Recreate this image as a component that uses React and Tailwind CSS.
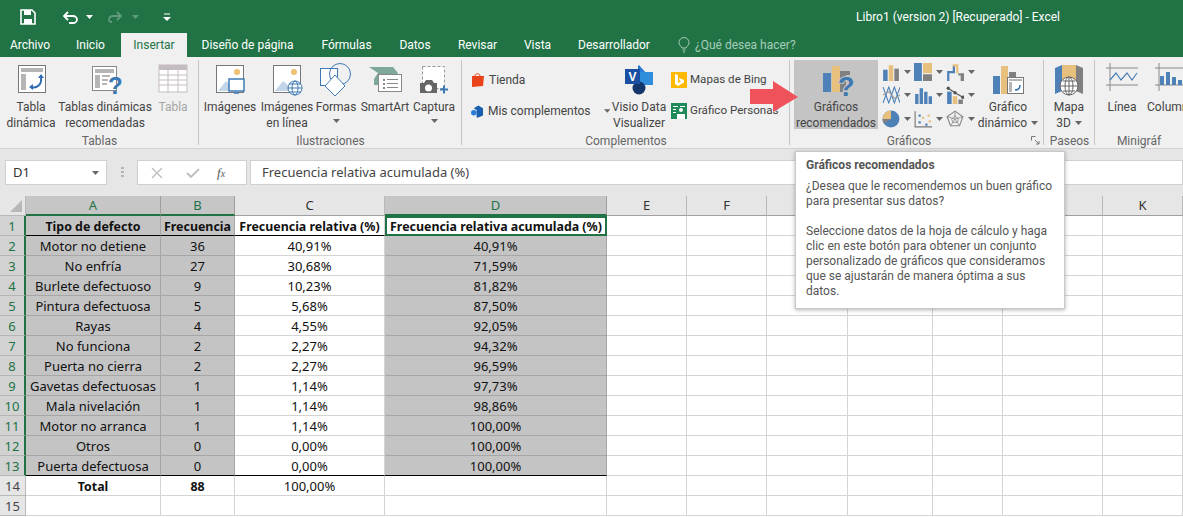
import React from "react";

const font = "font-['Roboto',sans-serif]";
const cellFont = "font-['Noto_Sans',sans-serif]";
const COLS = ["A", "B", "C", "D", "E", "F", "G", "H", "I", "J", "K"];
const rows = [
  ["Motor no detiene", "36", "40,91%", "40,91%"],
  ["No enfría", "27", "30,68%", "71,59%"],
  ["Burlete defectuoso", "9", "10,23%", "81,82%"],
  ["Pintura defectuosa", "5", "5,68%", "87,50%"],
  ["Rayas", "4", "4,55%", "92,05%"],
  ["No funciona", "2", "2,27%", "94,32%"],
  ["Puerta no cierra", "2", "2,27%", "96,59%"],
  ["Gavetas defectuosas", "1", "1,14%", "97,73%"],
  ["Mala nivelación", "1", "1,14%", "98,86%"],
  ["Motor no arranca", "1", "1,14%", "100,00%"],
  ["Otros", "0", "0,00%", "100,00%"],
  ["Puerta defectuosa", "0", "0,00%", "100,00%"],
];

const Caret = ({ className = "" }) => (
  <svg width="7" height="4" viewBox="0 0 7 4" className={className}>
    <path d="M0 0h7L3.5 4z" fill="#666" />
  </svg>
);

const Icon = ({ w = 36, h = 36, children }) => (
  <svg width={w} height={h} viewBox={`0 0 ${w} ${h}`} fill="none">
    {children}
  </svg>
);

const PivotIcon = () => (
  <Icon>
    <rect x="5.500" y="2.500" width="27" height="27" fill="#fff" stroke="#777" />
    <path d="M8 5h22v4H8zM8 11h5v16H8z" fill="#b5b5b5" />
    <path d="M18 24c6 2 11-3 10-9" stroke="#2f6db0" strokeWidth="2" />
    <path d="M25 15l3-4 3 4zM20 21l-4 3 4 3z" fill="#2f6db0" />
  </Icon>
);

const RecPivotIcon = () => (
  <Icon>
    <rect x="5.500" y="3.500" width="24" height="24" fill="#fff" stroke="#888" />
    <path d="M8 6h19v4H8zM8 12h5v13H8zM15 12h8v2h-8zM15 16h6v2h-6zM15 20h5v2h-5z" fill="#b5b5b5" />
    <text x="21" y="31" fontSize="24" fontWeight="700" fontFamily="Liberation Sans" fill="#3a78b5">?</text>
  </Icon>
);

const TableIcon = () => (
  <Icon w={32}>
    <rect x="2" y="2" width="28" height="27" fill="#fff" stroke="#c3bcc3" />
    <path d="M2 2h28v5H2z" fill="#c3bcc3" />
    <path d="M11 2v27M21 2v27M2 12h28M2 17h28M2 22h28" stroke="#c3bcc3" />
  </Icon>
);

const PictureIcon = ({ overlay }) => (
  <Icon w={32}>
    <rect x="2.500" y="2.500" width="27" height="27" fill="#fff" stroke="#777" />
    <circle cx="23" cy="9" r="3" fill="#eec170" />
    <path d="M4 28l8-10 7 6 3 4z" fill="#c3d5e8" />
    {overlay}
  </Icon>
);

const ShapesIcon = () => (
  <Icon>
    <rect x="2.500" y="5.500" width="17" height="17" fill="#fff" stroke="#3f7ab5" />
    <circle cx="22" cy="11" r="10.500" fill="none" stroke="#3f7ab5" />
    <path d="M17 12l10 11-10 10-10-10z" fill="#fff" stroke="#3f7ab5" />
  </Icon>
);

const SmartArtIcon = () => (
  <Icon w={34}>
    <path d="M1 4h24l5 6-5 6H6l4-6z" fill="#7ea99a" />
    <path d="M6 16h8v6H6z" fill="#7ea99a" />
    <rect x="10.500" y="11.500" width="23" height="17" fill="#fff" stroke="#888" />
    <path d="M15 16h2v2h-2zM15 20h2v2h-2zM19 16h11v1H19zM19 20h11v1H19zM15 24h2v2h-2zM19 24h11v1H19z" fill="#888" />
  </Icon>
);

const CaptureIcon = () => (
  <Icon>
    <rect x="6.500" y="3.500" width="22" height="22" fill="#fff" stroke="#999" strokeDasharray="3 2" />
    <path d="M4 20h4l2-3h6l2 3h3v10H4z" fill="#666" />
    <circle cx="12.500" cy="25" r="3.500" fill="#fff" />
    <path d="M24 26.500h8M28 22.500v8" stroke="#3f7ab5" strokeWidth="2" />
  </Icon>
);

const VisioIcon = () => (
  <Icon w={30} h={36}>
    <path d="M14 2l7 7-7 7z" fill="#1f6fc0" />
    <path d="M15 2l6 7h-6z" fill="#2a7dd6" />
    <rect x="16" y="9" width="13" height="13" fill="#2f8ddc" />
    <circle cx="15" cy="25" r="6.500" fill="#14366b" />
    <rect x="1" y="6" width="15" height="15" fill="#1a4fa3" />
    <text x="8.500" y="18" textAnchor="middle" fontSize="12" fontWeight="700" fontFamily="Liberation Sans" fill="#fff">V</text>
  </Icon>
);

const BingIcon = () => (
  <svg width="16" height="16" viewBox="0 0 16 16">
    <rect width="16" height="16" fill="#ffb900" />
    <path d="M4 2l3 1v8l3-1.500-1.500-1L8 6l5 2v2.500L7 14l-3-2z" fill="#fff" />
  </svg>
);

const PeopleIcon = () => (
  <svg width="16" height="16" viewBox="0 0 16 16">
    <rect width="16" height="16" fill="#1e8a5a" />
    <path d="M2 3h5v1H2zM2 6h3v1H2zM2 9h3v1H2zM9 3h5v1H9z" fill="#fff" />
    <circle cx="10" cy="7" r="2" fill="#fff" />
    <path d="M6 16v-5h8v5z" fill="#fff" />
  </svg>
);

const RecChartIcon = () => (
  <Icon>
    <rect x="5" y="10" width="8" height="19" fill="#4e81b8" />
    <rect x="14" y="3" width="8" height="26" fill="#e8c07d" />
    <rect x="22" y="8" width="10" height="4" fill="#808080" />
    <rect x="22" y="12" width="6" height="17" fill="#808080" />
    <text x="20" y="33" fontSize="27" fontWeight="700" fontFamily="Liberation Sans" fill="#3f78b0" stroke="#c4c4c4" strokeWidth="2" paintOrder="stroke">?</text>
  </Icon>
);

const PivotChartIcon = () => (
  <Icon w={34}>
    <rect x="2" y="13" width="7" height="18" fill="#4e81b8" />
    <rect x="10" y="3" width="7" height="28" fill="#e8c07d" />
    <rect x="18" y="9" width="7" height="5" fill="#808080" />
    <rect x="16.500" y="14.500" width="16" height="16" fill="#fff" stroke="#777" />
    <path d="M18 16h13v2H18zM18 19h3v10h-3z" fill="#b5b5b5" />
    <path d="M24 27c3 0 5-2 5-5" stroke="#2f6db0" strokeWidth="1.500" />
  </Icon>
);

const Map3DIcon = () => (
  <Icon>
    <path d="M4 5l7-3v26l-7 3z" fill="#4e81b8" />
    <path d="M11 2h7v26h-7z" fill="#e8c07d" />
    <path d="M18 2h7v26h-7z" fill="#e8c07d" />
    <path d="M25 2l7 3v26l-7-3z" fill="#808080" />
    <circle cx="18" cy="23" r="9" fill="#fff" stroke="#666" />
    <path d="M9 23h18M18 14v18M12 18h12M12 28h12" stroke="#666" />
    <ellipse cx="18" cy="23" rx="4" ry="9" stroke="#666" />
  </Icon>
);

const LineIcon = () => (
  <Icon w={32} h={30}>
    <path d="M0 5h32M4 0v28M0 22h32" stroke="#888" />
    <path d="M4 17l6-7 5 7 6-7 5 7 5-7" stroke="#4e81b8" strokeWidth="1.200" />
  </Icon>
);

const ColumnIcon = () => (
  <Icon w={32} h={30}>
    <path d="M0 5h32M4 0v28M0 22h32" stroke="#888" />
    <path d="M5 13h4v9H5zM11 9h4v13h-4zM17 14h4v8h-4zM23 17h4v5h-4z" fill="#4e81b8" />
  </Icon>
);

const smallCharts = [
  <><path d="M1 6h4v10H1z" fill="#4e81b8" /><path d="M6 2h4v14H6z" fill="#e8c07d" /><path d="M11 5h4v11h-4z" fill="#808080" /></>,
  <><path d="M0 0h7v16H0z" fill="#4e81b8" /><path d="M8 0h8v9H8z" fill="#e8c07d" /><path d="M8 10h8v6H8z" fill="#808080" /></>,
  <><path d="M1 16V7h5V2h2v7H3v7z" fill="#4e81b8" /><path d="M6 1h5v8H9V3H6z" fill="#e8c07d" /><path d="M11 9h5v7h-3v-5h-2z" fill="#808080" /></>,
  <><path d="M1 1l5 14 5-14 5 14" stroke="#4e81b8" /><path d="M1 15l5-14 5 14 5-14" stroke="#4e81b8" /><path d="M1 8l5-3 5 6 5-3" stroke="#999" /></>,
  <><path d="M1 7h3v9H1zM5 2h3v14H5zM9 5h3v11H9zM13 9h3v7h-3z" fill="#4e81b8" /></>,
  <><path d="M1 5h4v11H1z" fill="#4e81b8" /><path d="M6 9h4v7H6z" fill="#e8c07d" /><path d="M11 12h4v4h-4z" fill="#808080" /><path d="M2 2l6 4 7 4" stroke="#555" /><circle cx="2" cy="2" r="1.500" fill="#555" /><circle cx="8" cy="6" r="1.500" fill="#555" /><circle cx="15" cy="10" r="1.500" fill="#555" /></>,
  <><circle cx="8" cy="8" r="7.500" fill="#4e81b8" /><path d="M8 8V.5A7.500 7.500 0 0 0 .7 9.500z" fill="#e8c07d" /><path d="M8 8H.5A7.500 7.500 0 0 0 1.500 12z" fill="#808080" /></>,
  <><path d="M1 1v14h15" stroke="#777" /><path d="M4 4h2v2H4zM4 10h2v2H4zM10 12h2v2h-2z" fill="#4e81b8" /><path d="M7 6h2v2H7zM12 4h2v2h-2zM13 9h2v2h-2z" fill="#e8c07d" /></>,
  <><path d="M8 1l7 5-3 8H4L1 6z" stroke="#888" /><path d="M8 1v7l7-2M8 8l4 6M8 8l-4 6M8 8L1 6M5 8l3-3 3 3-1 3H6z" stroke="#888" strokeWidth=".7" /></>,
];

const RibbonButton = ({ width, icon, lines, muted, active, caret }) => (
  <div className={`flex flex-col items-center shrink-0 h-[69px] pt-[3px] ${width} ${active ? "bg-[#c4c4c4]" : ""}`}>
    <div className="h-9 flex items-start justify-center">{icon}</div>
    {lines.map((l, i) => (
      <div key={i} className={`h-4 leading-4 whitespace-nowrap flex items-center gap-1 ${muted ? "text-[#a6a6a6]" : "text-[#444]"}`}>
        {l}
        {caret === true && i === lines.length - 1 && <Caret />}
      </div>
    ))}
    {caret === "below" && <Caret className="mt-1" />}
  </div>
);

const Group = ({ width, label, children, dialog, last }) => (
  <div className={`relative shrink-0 flex flex-col pt-[3px] ${width}`}>
    <div className="flex h-[69px]">{children}</div>
    <div className={`h-[18px] mt-[3px] leading-[18px] text-center text-[#666] ${dialog ? "pr-4" : ""}`}>{label}</div>
    {dialog && (
      <svg width="9" height="9" viewBox="0 0 9 9" className="absolute right-[4px] bottom-[3px]">
        <path d="M.5 .5h4M.5 .5v4M4 4l4 4M8 5v3H5" stroke="#777" fill="none" />
      </svg>
    )}
    {!last && <div className="absolute right-0 top-[3px] bottom-[3px] w-px bg-[#c6c6c6]" />}
  </div>
);

const Tab = ({ width, children, active }) => (
  <div className={`h-6 leading-[25px] text-center shrink-0 ${width} ${active ? "bg-[#f0f0f0] text-[#217346]" : "text-white"}`}>
    {children}
  </div>
);

const RowHead = ({ n, selected }) => (
  <div className={`h-5 leading-[21px] text-center border-b text-[13px] ${cellFont} ${selected ? "bg-[#d2d2d2] text-[#217346] border-[#b5b5b5] border-r-2 border-r-[#217346]" : "bg-[#e6e6e6] text-[#444] border-[#b9b9b9] border-r"}`}>
    {n}
  </div>
);

const ColHead = ({ c }) => {
  const sel = ["A", "B", "D"].includes(c);
  return (
    <div className={`h-5 leading-[19px] text-center text-[13px] border-r ${cellFont} ${sel ? "bg-[#c6c6c6] text-[#217346] border-[#9f9f9f] border-b-2 border-b-[#217346]" : "bg-[#e6e6e6] text-[#333] border-[#b9b9b9] border-b border-b-[#9f9f9f]"}`}>
      {c}
    </div>
  );
};

const Cell = ({ children, gray, bold, dark }) => (
  <div
    className={`h-5 leading-[21px] text-center whitespace-nowrap overflow-hidden border-r border-b text-[#111] ${cellFont} ${gray ? "bg-[#c4c4c4] border-[#a6a6a6]" : "bg-white border-[#d4d4d4]"} ${bold ? "font-bold text-[12.4px]" : "text-[13px]"} ${dark ? "border-b-black" : ""}`}
  >
    {children}
  </div>
);

export default function App() {
  return (
    <div className={`relative w-[1183px] h-[518px] overflow-hidden bg-white text-[12px] ${font}`}>
      {/* Title bar */}
      <div className="h-[33px] bg-[#217346] flex items-center text-white">
        <svg width="16" height="16" viewBox="0 0 16 16" className="ml-[20px]" fill="none">
          <path d="M1 1h11l3 3v11H1z" stroke="#fff" strokeWidth="1.600" />
          <path d="M4 1h7v5H4zM4 10h8v5H4z" fill="#fff" />
        </svg>
        <svg width="16" height="14" viewBox="0 0 16 14" className="ml-[26px]" fill="none">
          <path d="M6 2L2 6l4 4M2 6h9c2 0 4 1.500 4 3.500S13 13 11 13H7" stroke="#fff" strokeWidth="1.800" />
        </svg>
        <Caret className="ml-[8px] [&>path]:fill-white" />
        <svg width="14" height="12" viewBox="0 0 14 12" className="ml-[15px]" fill="none">
          <path d="M9 1l4 4-4 4M13 5H5C3 5 1 6 1 8.500S3 11 4 11" stroke="#5f9a7e" strokeWidth="1.800" />
        </svg>
        <Caret className="ml-[10px] [&>path]:fill-[#5f9a7e]" />
        <svg width="8" height="8" viewBox="0 0 8 8" className="ml-[24px]">
          <path d="M1 .5h6v1H1zM0 4h8L4 8z" fill="#fff" />
        </svg>
        <div className="ml-auto pr-[123px]">Libro1 (version 2) [Recuperado] - Excel</div>
      </div>

      {/* Tabs */}
      <div className="h-6 bg-[#217346] flex items-center">
        <Tab width="w-[60px]">Archivo</Tab>
        <Tab width="w-[61px]">Inicio</Tab>
        <Tab width="w-[66px]" active>Insertar</Tab>
        <Tab width="w-[121px]">Diseño de página</Tab>
        <Tab width="w-[77px]">Fórmulas</Tab>
        <Tab width="w-[60px]">Datos</Tab>
        <Tab width="w-[65px]">Revisar</Tab>
        <Tab width="w-[55px]">Vista</Tab>
        <Tab width="w-[98px]">Desarrollador</Tab>
        <svg width="12" height="16" viewBox="0 0 12 16" className="ml-[15px]" fill="none">
          <path d="M4 11C3 9 1 8 1 5.500a5 5 0 0 1 10 0C11 8 9 9 8 11zM4.500 13h3M5 15h2" stroke="#a6cdb8" />
        </svg>
        <div className="ml-[5px] text-[#a6cdb8]">¿Qué desea hacer?</div>
      </div>

      {/* Ribbon */}
      <div className="h-[92px] bg-[#f0f0f0] border-b border-[#d2d2d2] flex overflow-hidden">
        <Group width="w-[199px]" label="Tablas">
          <RibbonButton width="w-[62px]" icon={<PivotIcon />} lines={["Tabla", "dinámica"]} />
          <RibbonButton width="w-[86px]" icon={<RecPivotIcon />} lines={["Tablas dinámicas", "recomendadas"]} />
          <RibbonButton width="w-[50px]" icon={<TableIcon />} lines={["Tabla"]} muted />
        </Group>
        <Group width="w-[263px]" label="Ilustraciones">
          <RibbonButton width="w-[62px]" icon={<PictureIcon overlay={<g><rect x="15" y="16" width="15" height="12" fill="#fff" stroke="#3f7ab5" strokeWidth="1.500" /><path d="M20 30h5" stroke="#3f7ab5" strokeWidth="1.500" /></g>} />} lines={["Imágenes"]} />
          <RibbonButton width="w-[52px]" icon={<PictureIcon overlay={<g stroke="#3f7ab5"><circle cx="24" cy="25" r="7" fill="#fff" /><ellipse cx="24" cy="25" rx="3" ry="7" /><path d="M17 25h14M18 21h12M18 29h12" /></g>} />} lines={["Imágenes", "en línea"]} />
          <RibbonButton width="w-[46px]" icon={<ShapesIcon />} lines={["Formas"]} caret="below" />
          <RibbonButton width="w-[52px]" icon={<SmartArtIcon />} lines={["SmartArt"]} />
          <RibbonButton width="w-[46px]" icon={<CaptureIcon />} lines={["Captura"]} caret="below" />
        </Group>
        <Group width="w-[328px]" label="Complementos">
          <div className="flex flex-col shrink-0 w-[148px] pl-[9px] pt-[12px] gap-[15px] text-[#444] whitespace-nowrap">
            <div className="flex items-center gap-[4px] h-4">
              <svg width="14" height="14" viewBox="0 0 14 14"><path d="M1 3h12l-1 10-11 1z" fill="#e8431a" /><path d="M4 3c0-3 5-3 5 0" stroke="#e8431a" fill="none" /></svg>
              Tienda
            </div>
            <div className="flex items-center gap-[4px] h-4">
              <svg width="14" height="14" viewBox="0 0 14 14"><path d="M3 4l5-3 5 3v8l-5 2H6V6z" fill="#1b5fb0" /><circle cx="3" cy="9" r="3" fill="#2a7dd6" /></svg>
              <span>Mis complementos</span>
              <Caret className="ml-[9px]" />
            </div>
          </div>
          <RibbonButton width="w-[58px]" icon={<VisioIcon />} lines={["Visio Data", "Visualizer"]} />
          <div className="flex flex-col shrink-0 pl-[3px] pt-[12px] gap-[15px] text-[#444] text-[11.6px] whitespace-nowrap">
            <div className="flex items-center gap-[3px] h-4"><BingIcon />Mapas de Bing</div>
            <div className="flex items-center gap-[3px] h-4"><PeopleIcon />Gráfico Personas</div>
          </div>
        </Group>
        <Group width="w-[254px]" label="Gráficos" dialog>
          <div className="ml-[4px]">
            <RibbonButton width="w-[84px]" icon={<RecChartIcon />} lines={["Gráficos", "recomendados"]} active />
          </div>
          <div className="ml-[4px] w-[96px] h-[69px] shrink-0 grid grid-cols-3 auto-rows-[23.5px]">
            {smallCharts.map((c, i) => (
              <div key={i} className="flex items-center">
                <svg width="18" height="18" viewBox="0 0 16 16" fill="none">{c}</svg>
                <Caret className="ml-[4px]" />
              </div>
            ))}
          </div>
          <RibbonButton width="w-[60px]" icon={<PivotChartIcon />} lines={["Gráfico", "dinámico"]} caret />
        </Group>
        <Group width="w-[51px]" label="Paseos">
          <RibbonButton width="w-[50px]" icon={<Map3DIcon />} lines={["Mapa", "3D"]} caret />
        </Group>
        <Group width="w-[88px]" label="Minigráf" last>
          <RibbonButton width="w-[54px]" icon={<LineIcon />} lines={["Línea"]} />
          <RibbonButton width="w-[44px]" icon={<ColumnIcon />} lines={["Columna"]} />
        </Group>
      </div>

      {/* Formula bar */}
      <div className={`h-[47px] bg-[#e6e6e6] flex items-start pt-[11px] text-[13px] ${cellFont}`}>
        <div className="ml-[5px] w-[102px] h-[25px] bg-white border border-[#d0d0d0] flex items-center justify-between pl-[7px] pr-[7px] text-[#333]">
          D1
          <Caret />
        </div>
        <div className="w-[30px] h-[25px] flex items-center justify-center">
          <svg width="3" height="11" viewBox="0 0 3 11"><path d="M0 0h3v2H0zM0 4h3v2H0zM0 8h3v2H0z" fill="#b5b5b5" /></svg>
        </div>
        <div className="w-[110px] h-[25px] bg-white border border-[#d0d0d0] flex items-center text-[#bbb]">
          <svg width="12" height="12" viewBox="0 0 12 12" className="ml-[13px]"><path d="M1 1l10 10M11 1L1 11" stroke="#bdbdbd" strokeWidth="1.400" /></svg>
          <svg width="14" height="12" viewBox="0 0 14 12" className="ml-[23px]"><path d="M1 6l4 4 8-8" stroke="#bdbdbd" strokeWidth="1.800" fill="none" /></svg>
          <span className="ml-[17px] text-[13px] italic text-[#555] font-['Liberation_Serif',serif]">f<span className="text-[10px]">x</span></span>
        </div>
        <div className="ml-[3px] flex-1 h-[25px] bg-white border border-[#d0d0d0] flex items-center pl-[11px] text-[#444]">
          Frecuencia relativa acumulada (%)
        </div>
      </div>

      {/* Sheet */}
      <div className="grid grid-cols-[26px_135px_74px_150px_222px_80px_80px_81px_85px_70px_100px_80px]">
        <div className="h-5 bg-[#e6e6e6] border-r border-b border-[#b9b9b9] flex items-end justify-end pr-[3px] pb-[3px]">
          <svg width="12" height="12" viewBox="0 0 12 12"><path d="M12 0v12H0z" fill="#b8b8b8" /></svg>
        </div>
        {COLS.map((c) => <ColHead key={c} c={c} />)}

        <RowHead n={1} selected />
        <Cell gray bold dark>Tipo de defecto</Cell>
        <Cell gray bold dark>Frecuencia</Cell>
        <Cell bold dark>Frecuencia relativa (%)</Cell>
        <div className={`h-5 leading-[17px] text-center text-[12.4px] font-bold text-[#111] whitespace-nowrap border-2 border-[#217346] bg-white ${cellFont}`}>Frecuencia relativa acumulada (%)</div>
        {COLS.slice(4).map((c) => <Cell key={c} />)}

        {rows.map((r, i) => (
          <React.Fragment key={i}>
            <RowHead n={i + 2} selected />
            <Cell gray dark={i === 11}>{r[0]}</Cell>
            <Cell gray dark={i === 11}>{r[1]}</Cell>
            <Cell dark={i === 11}>{r[2]}</Cell>
            <Cell gray dark={i === 11}>{r[3]}</Cell>
            {COLS.slice(4).map((c) => <Cell key={c} />)}
          </React.Fragment>
        ))}

        <RowHead n={14} />
        <Cell bold>Total</Cell>
        <Cell bold>88</Cell>
        <Cell>100,00%</Cell>
        <Cell />
        {COLS.slice(4).map((c) => <Cell key={c} />)}

        <RowHead n={15} />
        {COLS.map((c) => <Cell key={c} />)}
      </div>

      {/* Tooltip */}
      <div className="absolute left-[795px] top-[151px] w-[270px] h-[158px] bg-white border border-[#c8c8c8] shadow-[0_1px_4px_rgba(0,0,0,0.3)] pl-[10px] pt-[6px] text-[#555] leading-[15px] whitespace-nowrap">
        <div className="font-bold mb-[6px]">Gráficos recomendados</div>
        <div>¿Desea que le recomendemos un buen gráfico<br />para presentar sus datos?</div>
        <div className="mt-[15px]">Seleccione datos de la hoja de cálculo y haga<br />clic en este botón para obtener un conjunto<br />personalizado de gráficos que consideramos<br />que se ajustarán de manera óptima a sus<br />datos.</div>
      </div>

      {/* Red arrow */}
      <svg width="48" height="31" viewBox="0 0 48 31" className="absolute left-[750px] top-[81px]">
        <path d="M0 8h23V0l25 16-25 15v-8H0z" fill="#f0525c" />
      </svg>
    </div>
  );
}
